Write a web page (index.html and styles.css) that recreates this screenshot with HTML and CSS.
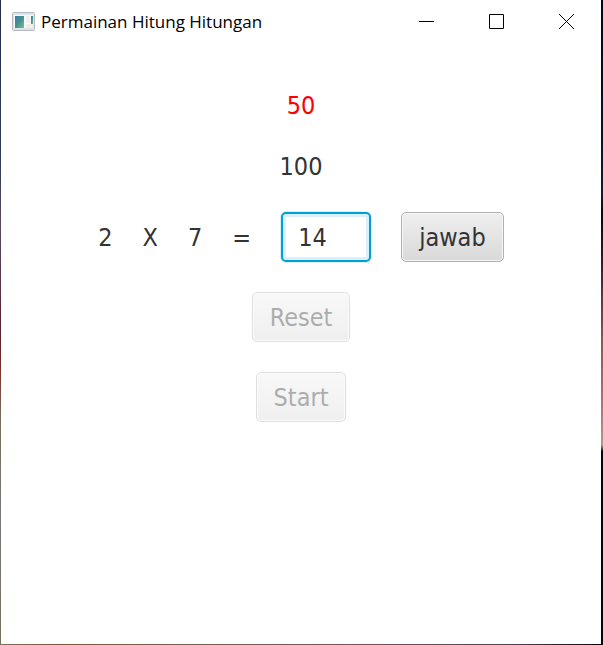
FILE: index.html
```html
<!DOCTYPE html>
<html lang="id">
<head>
<meta charset="utf-8">
<title>Permainan Hitung Hitungan</title>
<link rel="stylesheet" href="styles.css">
</head>
<body>
<div class="desktop">
  <div class="window">
    <header class="titlebar">
      <svg class="app-icon" width="24" height="20" viewBox="0 0 24 20" aria-hidden="true">
        <defs>
          <linearGradient id="pane" x1="0" y1="0" x2="1" y2="1">
            <stop offset="0" stop-color="#3a7ca6"/>
            <stop offset="0.5" stop-color="#439491"/>
            <stop offset="1" stop-color="#7cc084"/>
          </linearGradient>
        </defs>
        <rect x="0.5" y="0.5" width="22" height="18" rx="1" fill="#dfe2e7" stroke="#b4bac4"/>
        <rect x="2" y="3" width="19" height="13" fill="#fafafa"/>
        <rect x="3" y="4" width="9" height="12" fill="url(#pane)"/>
        <rect x="14" y="4" width="4" height="7" fill="#f0f0f0"/>
        <rect x="14" y="12" width="7" height="4" fill="#eee"/>
        <rect x="19" y="4" width="2" height="8" fill="url(#pane)"/>
      </svg>
      <h1 class="title">Permainan Hitung Hitungan</h1>
      <div class="controls">
        <button class="control" type="button" aria-label="Minimize"><svg width="15" height="15" viewBox="0 0 15 15"><path d="M0 7.5H15" stroke="#000"/></svg></button>
        <button class="control" type="button" aria-label="Maximize"><svg width="15" height="15" viewBox="0 0 15 15"><path d="M.5 .5H14.5V14.5H.5Z" fill="none" stroke="#000"/></svg></button>
        <button class="control" type="button" aria-label="Close"><svg width="15" height="15" viewBox="0 0 15 15"><path d="M0 0L15 15M15 0L0 15" stroke="#000"/></svg></button>
      </div>
    </header>
    <main class="game">
      <p class="score">50</p>
      <p class="value">100</p>
      <form class="question">
        <span>2</span>
        <span>X</span>
        <span>7</span>
        <label for="answer">=</label>
        <input class="answer" id="answer" type="text" value="14">
        <button class="button" type="button">jawab</button>
      </form>
      <button class="button" type="button" disabled>Reset</button>
      <button class="button" type="button" disabled>Start</button>
    </main>
  </div>
</div>
</body>
</html>
```
FILE: styles.css
```css
* {
  box-sizing: border-box;
}

body {
  margin: 0;
}

.desktop {
  display: flex;
  min-height: 100vh;
  padding: 0 2px 1px 1px;
  background:
    linear-gradient(#242c48, #2f3d5a 25%, #5a4a62 35%, #5a2030 52%, #7a3028 57%, #77705a 65%, #777 80%, #77715c) left / 1px 100% no-repeat,
    linear-gradient(#02071c, #0b1330 25%, #1a1830 30%, #0c0410 33%, #3a1526 40%, #8a5058 52%, #b8747c 64%, #b09a80 69%, #05050f 70%) right / 2px 100% no-repeat,
    linear-gradient(90deg, #77715c, #7a5a30 10%, #6f6350 30%, #71545a 60%, #4a4558 85%, #05050f);
}

.window {
  flex: 1;
  background: #fff;
}

.titlebar {
  display: flex;
  align-items: center;
  height: 43px;
  padding-left: 11px;
}

.app-icon {
  margin-right: 5px;
}

.title {
  flex: 1;
  margin: 0;
  font: 400 17px/24px "Open Sans", sans-serif;
  color: #000;
}

.controls {
  display: flex;
}

.control {
  display: flex;
  align-items: center;
  justify-content: center;
  width: 70px;
  height: 43px;
  padding: 0;
  border: 0;
  background: none;
}

.game {
  display: flex;
  flex-direction: column;
  align-items: center;
  gap: 30px;
  padding-top: 47px;
  font: 25px/31px "DejaVu Sans Condensed", "DejaVu Sans", sans-serif;
  color: #333;
}

.score,
.value {
  margin: 0;
}

.score {
  color: #f00;
}

.question {
  display: flex;
  align-items: center;
  gap: 30px;
}

.answer {
  width: 90px;
  height: 50px;
  padding: 0 15px;
  border: 2px solid #039ed3;
  border-radius: 5px;
  outline: 0;
  box-shadow: 0 0 0 1px #d9f0f8, inset 0 0 0 3px #d9f0f8;
  font: inherit;
  color: inherit;
}

.button {
  height: 50px;
  padding: 0 17px;
  border: 1px solid #b0b0b0;
  border-radius: 5px;
  background: linear-gradient(#efefef, #d9d9d9);
  box-shadow: inset 0 0 0 1px #f6f6f6;
  font: inherit;
  color: #333;
}

.button:disabled {
  opacity: 0.4;
}
```
